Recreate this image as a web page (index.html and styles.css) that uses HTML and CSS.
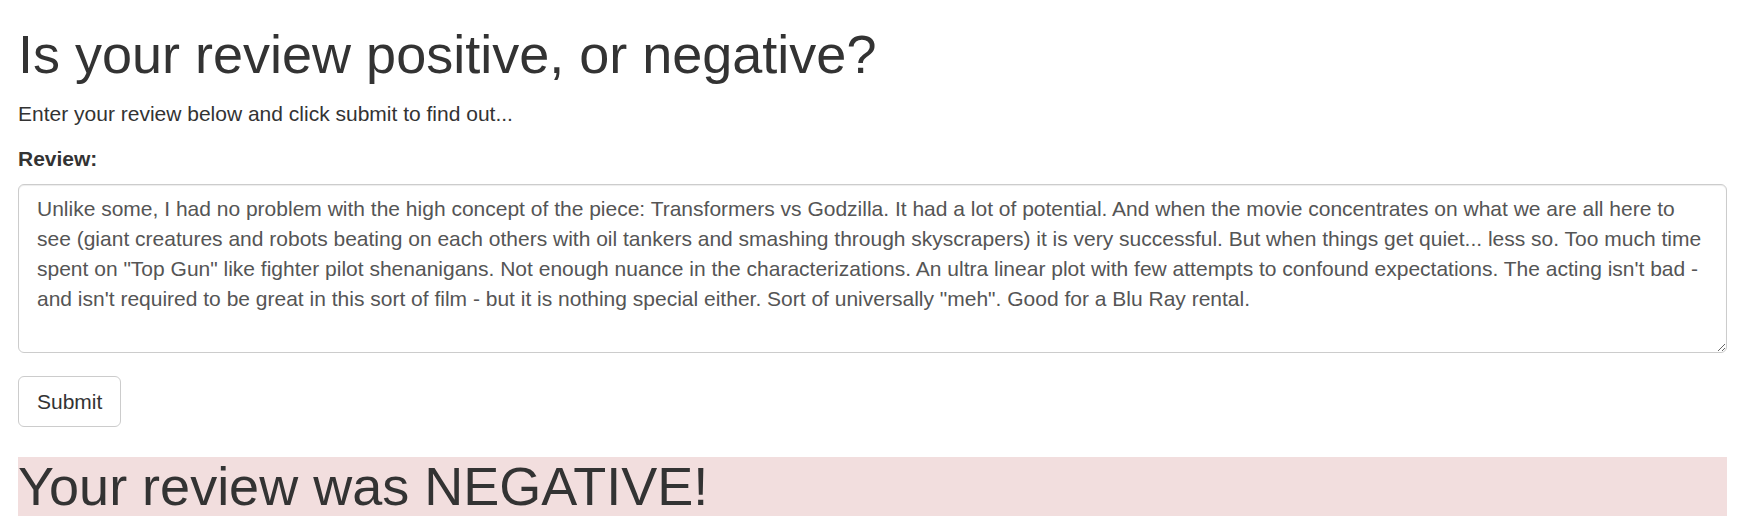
FILE: index.html
```html
<!DOCTYPE html>
<html lang="en">
<head>
<meta charset="utf-8">
<title>Review sentiment</title>
<link rel="stylesheet" href="styles.css">
</head>
<body>
<div class="page">
  <h1 class="title">Is your review positive, or negative?</h1>
  <p class="intro">Enter your review below and click submit to find out...</p>
  <form class="review-form">
    <div class="form-group">
      <label class="field-label" for="review">Review:</label>
      <textarea class="field-input" id="review" rows="5">Unlike some, I had no problem with the high concept of the piece: Transformers vs Godzilla. It had a lot of potential. And when the movie concentrates on what we are all here to see (giant creatures and robots beating on each others with oil tankers and smashing through skyscrapers) it is very successful. But when things get quiet... less so. Too much time spent on "Top Gun" like fighter pilot shenanigans. Not enough nuance in the characterizations. An ultra linear plot with few attempts to confound expectations. The acting isn't bad - and isn't required to be great in this sort of film - but it is nothing special either. Sort of universally "meh". Good for a Blu Ray rental.</textarea>
    </div>
    <button class="btn" type="button">Submit</button>
  </form>
  <h1 class="result result-negative">Your review was NEGATIVE!</h1>
</div>
</body>
</html>
```
FILE: styles.css
```css
html, body {
  margin: 0;
  padding: 0;
  background: #fff;
}

body {
  font-family: "Liberation Sans", Arial, sans-serif;
  font-size: 21px;
  line-height: 30px;
  color: #333;
}

.page {
  padding: 0 16px 0 18px;
}

.title,
.result {
  font-size: 54px;
  line-height: 59px;
  font-weight: 400;
  margin: 0;
}

.title {
  margin-top: 25px;
  margin-bottom: 15px;
}

.intro {
  margin: 0 0 15px;
}

.review-form {
  margin: 0;
}

.form-group {
  margin: 0;
}

.field-label {
  display: block;
  font-weight: 700;
  margin-bottom: 10px;
}

.field-input {
  display: block;
  box-sizing: border-box;
  width: 100%;
  height: 169px;
  margin: 0;
  padding: 9px 18px;
  font-family: inherit;
  font-size: 21px;
  line-height: 30px;
  color: #555;
  background: #fff;
  border: 1px solid #ccc;
  border-radius: 6px;
  box-shadow: inset 0 1px 1px rgba(0, 0, 0, 0.075);
  resize: vertical;
}

.btn {
  display: inline-block;
  box-sizing: border-box;
  margin-top: 23px;
  height: 51px;
  padding: 0 18px;
  font-family: inherit;
  font-size: 21px;
  line-height: 30px;
  color: #333;
  background: #fff;
  border: 1px solid #ccc;
  border-radius: 6px;
  cursor: pointer;
}

.result {
  margin-top: 30px;
}

.result-negative {
  background: #f2dede;
}
```
